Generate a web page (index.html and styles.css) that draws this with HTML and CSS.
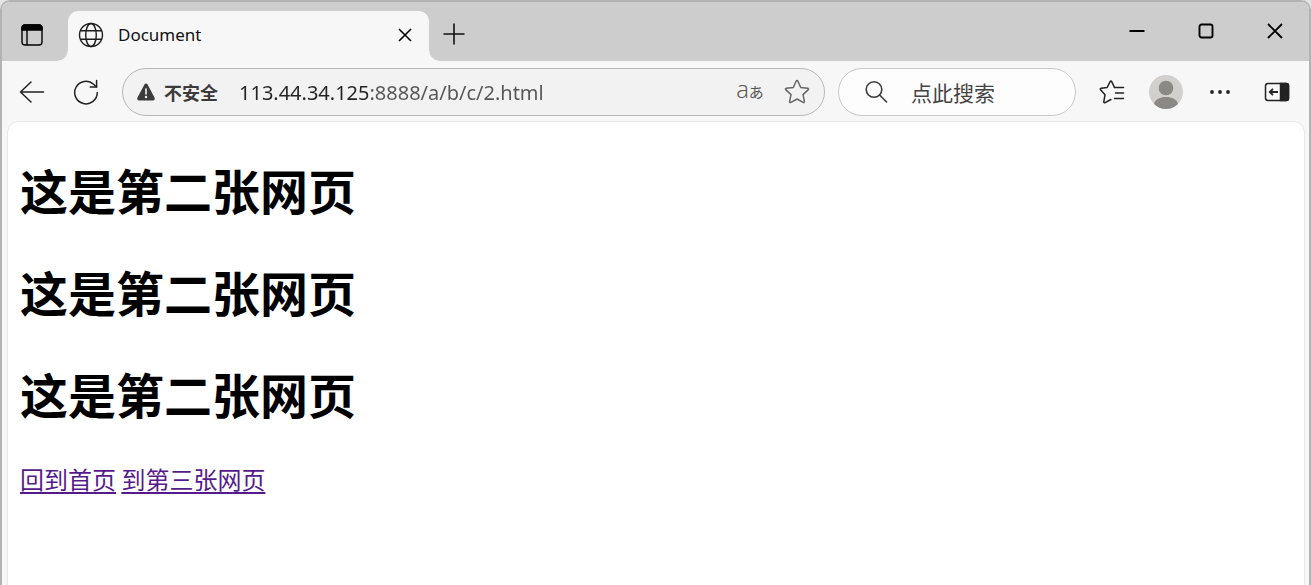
FILE: index.html
```html
<!DOCTYPE html>
<html lang="zh-CN">
<head>
    <meta charset="UTF-8">
    <meta name="viewport" content="width=device-width, initial-scale=1.0">
    <title>Document</title>
    <link rel="stylesheet" href="styles.css">
</head>
<body>
    <div class="window">
        <header class="titlebar">
            <button class="tab-actions" aria-label="标签页操作">
                <svg width="22" height="22" viewBox="0 0 22 22" fill="none" stroke="#000" stroke-width="1.4">
                    <rect x="1" y="1" width="20" height="20" rx="3"/>
                    <path d="M1 6V4a3 3 0 0 1 3-3h14a3 3 0 0 1 3 3v2z" fill="#000"/>
                    <path d="M6 6v15"/>
                </svg>
            </button>
            <div class="tab">
                <svg width="26" height="26" viewBox="0 0 26 26" fill="none" stroke="#1c1c1c" stroke-width="1.4">
                    <circle cx="13" cy="13" r="11.5"/>
                    <ellipse cx="13" cy="13" rx="5.3" ry="11.5"/>
                    <path d="M2.5 8.7h21M2.5 17.3h21"/>
                </svg>
                <span class="tab-title">Document</span>
                <button class="tab-close" aria-label="关闭标签页">
                    <svg width="14" height="14" viewBox="0 0 14 14" stroke="#000" stroke-width="1.6">
                        <path d="M1 1l12 12M13 1L1 13"/>
                    </svg>
                </button>
            </div>
            <button class="new-tab" aria-label="新建标签页">
                <svg width="22" height="22" viewBox="0 0 22 22" stroke="#111" stroke-width="1.6">
                    <path d="M11 .5v21M.5 11h21"/>
                </svg>
            </button>
            <div class="window-controls">
                <button aria-label="最小化">
                    <svg width="16" height="16" viewBox="0 0 16 16" stroke="#000" stroke-width="2">
                        <path d="M.5 8h15"/>
                    </svg>
                </button>
                <button aria-label="最大化">
                    <svg width="16" height="16" viewBox="0 0 16 16" fill="none" stroke="#000" stroke-width="1.9">
                        <rect x="1.5" y="1.5" width="13" height="13" rx="2"/>
                    </svg>
                </button>
                <button aria-label="关闭">
                    <svg width="16" height="16" viewBox="0 0 16 16" stroke="#000" stroke-width="1.9">
                        <path d="M1 1l14 14M15 1L1 15"/>
                    </svg>
                </button>
            </div>
        </header>

        <nav class="toolbar">
            <button class="tool" aria-label="返回">
                <svg width="26" height="24" viewBox="0 0 26 24" fill="none" stroke="#222" stroke-width="1.5" stroke-linecap="round" stroke-linejoin="round">
                    <path d="M24.5 12H1.5M12 2L1.5 12 12 22"/>
                </svg>
            </button>
            <button class="tool" aria-label="刷新">
                <svg width="26" height="26" viewBox="0 0 26 26" fill="none" stroke="#222" stroke-width="1.5" stroke-linecap="round" stroke-linejoin="round">
                    <path d="M24.3 13.5A11.3 11.3 0 1 1 20.6 5.2L23.6 8"/>
                    <path d="M23.6 1.5V8h-6.4"/>
                </svg>
            </button>
            <div class="address">
                <svg width="20" height="18" viewBox="0 0 20 18">
                    <path d="M8.4 1.6a1.8 1.8 0 0 1 3.2 0l7 13.2a1.8 1.8 0 0 1-1.6 2.7H3a1.8 1.8 0 0 1-1.6-2.7z" fill="#3b3b3b"/>
                    <path d="M10 6v5" stroke="#f2f2f2" stroke-width="1.6" stroke-linecap="round"/>
                    <circle cx="10" cy="14" r="1.2" fill="#f2f2f2"/>
                </svg>
                <label class="security" for="url">不安全</label>
                <input class="url" id="url" type="text" value="113.44.34.125:8888/a/b/c/2.html">
                <button class="translate" aria-label="翻译"><span>a</span><small>あ</small></button>
                <button class="favorite" aria-label="收藏">
                    <svg width="26" height="26" viewBox="0 0 26 26" fill="none" stroke="#666" stroke-width="1.5" stroke-linejoin="round">
                        <path d="M12.1 2.2q.9-1.4 1.8 0l2.8 6.3 6.9.8q1.6.4.5 1.6l-5.1 4.7 1.4 6.8q.1 1.5-1.3 1L13 20l-6.1 3.4q-1.4.5-1.3-1L7 15.6 1.9 10.9q-1.1-1.2.5-1.6l6.9-.8z"/>
                    </svg>
                </button>
            </div>
            <div class="search">
                <label for="search">
                    <svg width="24" height="24" viewBox="0 0 24 24" fill="none" stroke="#3b3b3b" stroke-width="1.6" stroke-linecap="round">
                        <circle cx="10" cy="9.5" r="7.8"/>
                        <path d="M15.6 15l7 7"/>
                    </svg>
                </label>
                <input id="search" type="text" placeholder="点此搜索" aria-label="搜索">
            </div>
            <div class="tools">
                <button class="tool" aria-label="收藏夹">
                    <svg width="26" height="26" viewBox="0 0 26 26" fill="none" stroke="#222" stroke-width="1.5" stroke-linecap="round" stroke-linejoin="round">
                        <path d="M15.5 8.5L12.7 2.7q-.8-1.4-1.6 0L8.2 8.5l-6.1.8q-1.4.4-.5 1.5L6 15.7l-1.2 7.1q0 1.3 1.3.9l5.8-3.2"/>
                        <path d="M15.500 8.500h9M16.500 14h8M15.500 19.500h9"/>
                    </svg>
                </button>
                <button class="tool" aria-label="个人资料">
                    <svg width="34" height="34" viewBox="0 0 34 34">
                        <circle cx="17" cy="17" r="17" fill="#d2d0cd"/>
                        <circle cx="17" cy="13" r="7.3" fill="#8c8884"/>
                        <path d="M5 29c1-4.5 6-7 12-7s11 2.5 12 7a17 17 0 0 1-24 0z" fill="#8c8884"/>
                    </svg>
                </button>
                <button class="tool" aria-label="更多">
                    <svg width="22" height="6" viewBox="0 0 22 6" fill="#222">
                        <circle cx="3" cy="3" r="1.9"/><circle cx="11" cy="3" r="1.9"/><circle cx="19" cy="3" r="1.9"/>
                    </svg>
                </button>
            </div>
            <button class="tool" aria-label="侧边栏">
                <svg width="26" height="20" viewBox="0 0 26 20" fill="none" stroke="#222" stroke-width="1.5">
                    <rect x="1.5" y="1.5" width="23" height="17" rx="2.5"/>
                    <path d="M16.500 1.500h6a2 2 0 0 1 2 2v13a2 2 0 0 1-2 2h-6z" fill="#222"/>
                    <path d="M14 10H6M9 6.8L5.800 10 9 13.200" stroke-width="1.800"/>
                </svg>
            </button>
        </nav>

        <main class="page">
            <h1>这是第二张网页</h1>
            <h1>这是第二张网页</h1>
            <h1>这是第二张网页</h1>
            <a href="#">回到首页</a>
            <a href="#">到第三张网页</a>
        </main>
    </div>
</body>
</html>
```

FILE: styles.css
```css
* {
    box-sizing: border-box;
}
body {
    margin: 0;
    background: #e4e4e4;
    font-family: "Noto Sans", "Noto Sans CJK SC", sans-serif;
}
button {
    display: flex;
    align-items: center;
    justify-content: center;
    padding: 0;
    border: 0;
    background: none;
    cursor: pointer;
}
input {
    min-width: 0;
    padding: 0;
    border: 0;
    outline: 0;
    background: none;
    font-family: inherit;
}
.window {
    display: flex;
    flex-direction: column;
    min-height: 100vh;
    border: 2px solid #b3b3b3;
    border-bottom: 0;
    border-radius: 10px 10px 0 0;
    background: #f7f7f7;
    overflow: hidden;
}

/* title bar */
.titlebar {
    display: flex;
    height: 59px;
    background: #cdcdcd;
}
.tab-actions {
    width: 60px;
    margin-right: 6px;
    padding-top: 7px;
}
.tab {
    position: relative;
    display: flex;
    align-items: center;
    width: 361px;
    margin-top: 9px;
    padding: 0 14px 2px 10px;
    border-radius: 10px 10px 0 0;
    background: #f7f7f7;
}
.tab::before,
.tab::after {
    content: "";
    position: absolute;
    bottom: 0;
    width: 10px;
    height: 10px;
}
.tab::before {
    right: 100%;
    background: radial-gradient(circle at 0 0, #cdcdcd 9px, #f7f7f7 10px);
}
.tab::after {
    left: 100%;
    background: radial-gradient(circle at 100% 0, #cdcdcd 9px, #f7f7f7 10px);
}
.tab-title {
    flex: 1;
    margin-left: 14px;
    padding-bottom: 2px;
    font-size: 17px;
    color: #111;
}
.tab-close {
    width: 20px;
    height: 20px;
}
.new-tab {
    width: 50px;
    padding-top: 4px;
}
.window-controls {
    display: flex;
    margin-left: auto;
    padding-bottom: 2px;
}
.window-controls button {
    width: 69px;
}

/* toolbar */
.toolbar {
    display: flex;
    align-items: center;
    height: 60px;
    padding: 2px 5px 0 3px;
}
.tool {
    width: 54px;
    height: 48px;
}
.address,
.search {
    display: flex;
    align-items: center;
    height: 48px;
    border: 1px solid #b8b8b8;
    border-radius: 24px;
}
.address {
    flex: 1;
    min-width: 0;
    margin-left: 9px;
    padding: 0 14px 0 13px;
    background: #f2f2f2;
}
.security {
    margin-left: 8px;
    font-size: 18px;
    font-weight: bold;
    color: #3b3b3b;
}
/* the host is darker than the port and path */
.url {
    flex: 1;
    margin-left: 21px;
    font-size: 20px;
    color: transparent;
    background: linear-gradient(to right, #222 129px, #555 129px);
    -webkit-background-clip: text;
    background-clip: text;
    caret-color: #222;
}
.translate {
    align-items: baseline;
    width: 28px;
    margin-right: 20px;
    padding-bottom: 4px;
    font-family: "Open Sans", "Noto Sans CJK JP", sans-serif;
    font-size: 24px;
    font-weight: 300;
    line-height: 24px;
    color: #555;
}
.translate small {
    font-size: 15px;
    font-weight: 400;
}
.search {
    width: 238px;
    margin: 0 9px 0 13px;
    padding: 0 25px;
    border-color: #c8c8c8;
    background: #fdfdfd;
}
.search label {
    display: flex;
}
.search input {
    flex: 1;
    margin-left: 23px;
    font-size: 21px;
    font-family: "Noto Sans CJK SC", sans-serif;
}
.search input::placeholder {
    color: #444;
}
.tools {
    display: flex;
    margin-right: 3px;
}

/* page */
.page {
    flex: 1;
    margin: 0 4px 0 5px;
    padding: 35px 12px;
    border: 1px solid #e8e8e8;
    border-bottom: 0;
    border-radius: 12px 12px 0 0;
    background: #fff;
    font-family: "Noto Sans CJK SC", sans-serif;
    font-size: 24px;
    line-height: 32px;
}
h1 {
    margin: 0 0 38px;
    font-size: 48px;
    line-height: 64px;
}
a {
    color: #551a8b;
    text-underline-offset: 3px;
    text-decoration-thickness: 2px;
}
```
